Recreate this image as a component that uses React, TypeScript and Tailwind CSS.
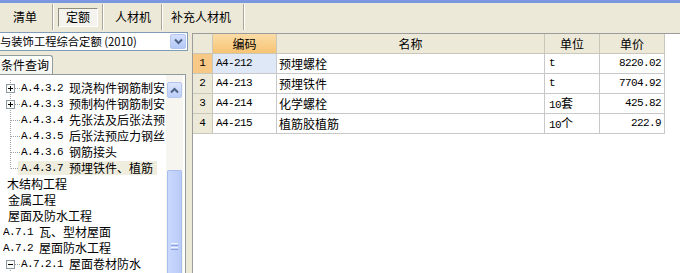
import React from "react";

const CJK = { fontFamily: '"Noto Sans CJK SC", "Noto Sans", sans-serif' };
const MONO = { fontFamily: '"Liberation Mono", "DejaVu Sans Mono", monospace' };

type Conn = "plus" | "line" | "end" | "none" | "minus";
type TreeRow = { conn: Conn; code?: string; name: string; pl?: number; sel?: boolean };

const treeRows: TreeRow[] = [
  { conn: "plus", code: "A.4.3.2", name: "现浇构件钢筋制安" },
  { conn: "plus", code: "A.4.3.3", name: "预制构件钢筋制安" },
  { conn: "line", code: "A.4.3.4", name: "先张法及后张法预" },
  { conn: "line", code: "A.4.3.5", name: "后张法预应力钢丝" },
  { conn: "line", code: "A.4.3.6", name: "钢筋接头" },
  { conn: "end", code: "A.4.3.7", name: "预埋铁件、植筋", sel: true },
  { conn: "none", name: "木结构工程", pl: 6 },
  { conn: "none", name: "金属工程", pl: 7 },
  { conn: "none", name: "屋面及防水工程", pl: 7 },
  { conn: "none", code: "A.7.1", name: "瓦、型材屋面", pl: 2 },
  { conn: "none", code: "A.7.2", name: "屋面防水工程", pl: 2 },
  { conn: "minus", code: "A.7.2.1", name: "屋面卷材防水" },
];

function Connector({ conn }: { conn: Conn }) {
  const dot = { stroke: "#a0a0a0", strokeWidth: 1, strokeDasharray: "1 1" };
  return (
    <svg width="20" height="16" viewBox="0 0 20 16" className="shrink-0">
      {(conn === "plus" || conn === "line") && <line x1="10.5" y1="0" x2="10.5" y2="16" {...dot} />}
      {conn === "end" && <line x1="10.5" y1="0" x2="10.5" y2="8.5" {...dot} />}
      {conn === "minus" && <line x1="10.5" y1="12" x2="10.5" y2="16" {...dot} />}
      <line x1="11" y1="8.5" x2="20" y2="8.5" {...dot} />
      {(conn === "plus" || conn === "minus") && (
        <g>
          <rect x="6.5" y="4.5" width="8" height="8" fill="#fbfbf8" stroke="#8d9aa6" />
          <line x1="8" y1="8.5" x2="13" y2="8.5" stroke="#000" />
          {conn === "plus" && <line x1="10.5" y1="6" x2="10.5" y2="11" stroke="#000" />}
        </g>
      )}
    </svg>
  );
}

function Sep() {
  return <div className="w-[2px] h-[26px] border-l border-[#aca899] border-r border-r-white shrink-0" />;
}

const cols = [
  { w: 64, label: "编码" },
  { w: 268, label: "名称" },
  { w: 55, label: "单位" },
  { w: 65, label: "单价" },
];

const data = [
  ["A4-212", "预埋螺栓", "t", "8220.02"],
  ["A4-213", "预埋铁件", "t", "7704.92"],
  ["A4-214", "化学螺栓", "10套", "425.82"],
  ["A4-215", "植筋胶植筋", "10个", "222.9"],
];

export default function App() {
  return (
    <div className="w-[680px] h-[273px] overflow-hidden bg-[#ece9d8] flex flex-col text-[12px] text-black" style={CJK}>
      {/* top blue strip */}
      <div className="h-[3px] bg-[#7b97e0] shrink-0" />
      {/* toolbar */}
      <div className="h-[28px] flex items-center shrink-0">
        <div className="w-[52px] pl-[13px] leading-none">清单</div>
        <Sep />
        <div className="w-[4px]" />
        <div className="w-[40px] h-[19px] flex items-center justify-center border border-t-[#8f8d80] border-l-[#8f8d80] border-b-white border-r-white bg-[#f4f3ee] leading-none">
          定额
        </div>
        <div className="w-[4px]" />
        <Sep />
        <div className="w-[57px] pl-[11px] leading-none">人材机</div>
        <Sep />
        <div className="w-[80px] pl-[8px] leading-none">补充人材机</div>
        <Sep />
      </div>
      {/* body */}
      <div className="flex-1 flex min-h-0">
        {/* left */}
        <div className="w-[192px] shrink-0 flex flex-col pt-[1px]">
          <div className="w-[188px] h-[19px] bg-white border border-[#7f9db9] border-l-0 flex items-center">
            <div className="flex-1 whitespace-nowrap leading-none text-[11.3px]">与装饰工程综合定额 (2010)</div>
            <div className="w-[16px] h-[15px] mr-[1px] rounded-[2px] bg-gradient-to-b from-[#d4e0fd] to-[#b4c8f6] border border-[#b6c7ef] flex items-center justify-center">
              <svg width="9" height="7" viewBox="0 0 9 7">
                <path d="M1 1.5 L4.5 5 L8 1.5" fill="none" stroke="#4d6185" strokeWidth="2" />
              </svg>
            </div>
          </div>
          <div className="h-[4px]" />
          <div className="flex">
            <div className="w-[53px] h-[19px] border border-b-0 border-[#919b9c] rounded-tr-[3px] bg-gradient-to-b from-white to-[#f3f3ef] border-l-0 flex items-center pl-[1px] leading-none">
              条件查询
            </div>
          </div>
          <div className="w-[186px] flex-1 min-h-0 border-t border-r border-[#919b9c] bg-white flex">
            <div className="w-[166px] overflow-hidden pt-[5px] flex flex-col">
              {treeRows.map((r, i) => (
                <div key={i} className="h-[16px] flex items-center whitespace-nowrap shrink-0" style={{ paddingLeft: r.pl ?? 0 }}>
                  {r.conn !== "none" && <Connector conn={r.conn} />}
                  <div
                    className={"flex items-center h-[14px] leading-none " + (r.sel ? "bg-[#efedde] -ml-[2px] pl-[3px] pr-[4px]" : "pl-[1px]")}
                  >
                    {r.code && (
                      <span className="text-[11px] tracking-[-0.6px]" style={MONO}>
                        {r.code}&nbsp;
                      </span>
                    )}
                    <span>{r.name}</span>
                  </div>
                </div>
              ))}
            </div>
            {/* scrollbar */}
            <div className="w-[17px] flex flex-col bg-[#f6f5f0] pt-[7px] pl-[1px]">
              <div className="w-[15px] h-[16px] rounded-[2px] bg-gradient-to-b from-[#dde6fe] to-[#bccdf8] border border-[#b4c6ee] flex items-center justify-center">
                <svg width="9" height="7" viewBox="0 0 9 7">
                  <path d="M1 5.5 L4.5 2 L8 5.5" fill="none" stroke="#4d6185" strokeWidth="2" />
                </svg>
              </div>
              <div className="h-[72px]" />
              <div className="w-[15px] flex-1 rounded-t-[2px] bg-gradient-to-r from-[#c9d8fd] to-[#b9cbf8] border border-b-0 border-[#a9bdec] flex flex-col items-center pt-[72px]">
                <div className="w-[7px] flex flex-col gap-[1px]">
                  <div className="h-px bg-[#eef3fe]" />
                  <div className="h-px bg-[#8ca3df]" />
                  <div className="h-px bg-[#eef3fe]" />
                  <div className="h-px bg-[#8ca3df]" />
                </div>
              </div>
            </div>
          </div>
        </div>
        {/* right grid */}
        <div className="flex-1 pt-[2px] flex flex-col">
          <div className="flex-1 bg-white border-l border-t border-[#9c9c9c] flex flex-col">
            {/* header */}
            <div className="h-[20px] flex shrink-0">
              <div className="w-[20px] bg-[#ece9d8] border-r border-b border-[#c9c7ba]" />
              {cols.map((c, i) => (
                <div
                  key={i}
                  className={
                    "flex items-center justify-center border-r border-b border-[#c9c7ba] leading-none " +
                    (i === 0 ? "bg-gradient-to-b from-[#fbdca6] to-[#f6c472]" : "bg-[#ece9d8]")
                  }
                  style={{ width: c.w }}
                >
                  {c.label}
                </div>
              ))}
            </div>
            {data.map((row, ri) => (
              <div key={ri} className="h-[20px] flex shrink-0">
                <div
                  className={
                    "w-[20px] flex items-center justify-center border-r border-b border-[#c9c7ba] text-[11px] " +
                    (ri === 0 ? "bg-[#f8c886]" : "bg-[#ece9d8]")
                  }
                  style={MONO}
                >
                  {ri + 1}
                </div>
                {row.map((v, ci) => (
                  <div
                    key={ci}
                    className={
                      "flex items-center border-r border-b border-[#c8c8c8] whitespace-nowrap overflow-hidden leading-none " +
                      (ci === 0 ? "pl-[3px] " : ci === 1 ? "pl-[2px] " : ci === 2 ? "pl-[4px] " : "justify-end pr-[3px] ") +
                      (ri === 0 && ci === 0 ? "bg-[#dfe8f6]" : "")
                    }
                    style={{ width: cols[ci].w }}
                  >
                    {ci === 1 || (ci === 2 && /[^\x00-\x7f]/.test(v)) ? (
                      ci === 2 ? (
                        <span>
                          <span className="text-[11px] tracking-[-0.6px]" style={MONO}>{v.replace(/[^\x00-\x7f]/g, "")}</span>
                          {v.replace(/[\x00-\x7f]/g, "")}
                        </span>
                      ) : (
                        v
                      )
                    ) : (
                      <span className="text-[11px] tracking-[-0.6px]" style={MONO}>
                        {v}
                      </span>
                    )}
                  </div>
                ))}
              </div>
            ))}
          </div>
        </div>
      </div>
    </div>
  );
}
